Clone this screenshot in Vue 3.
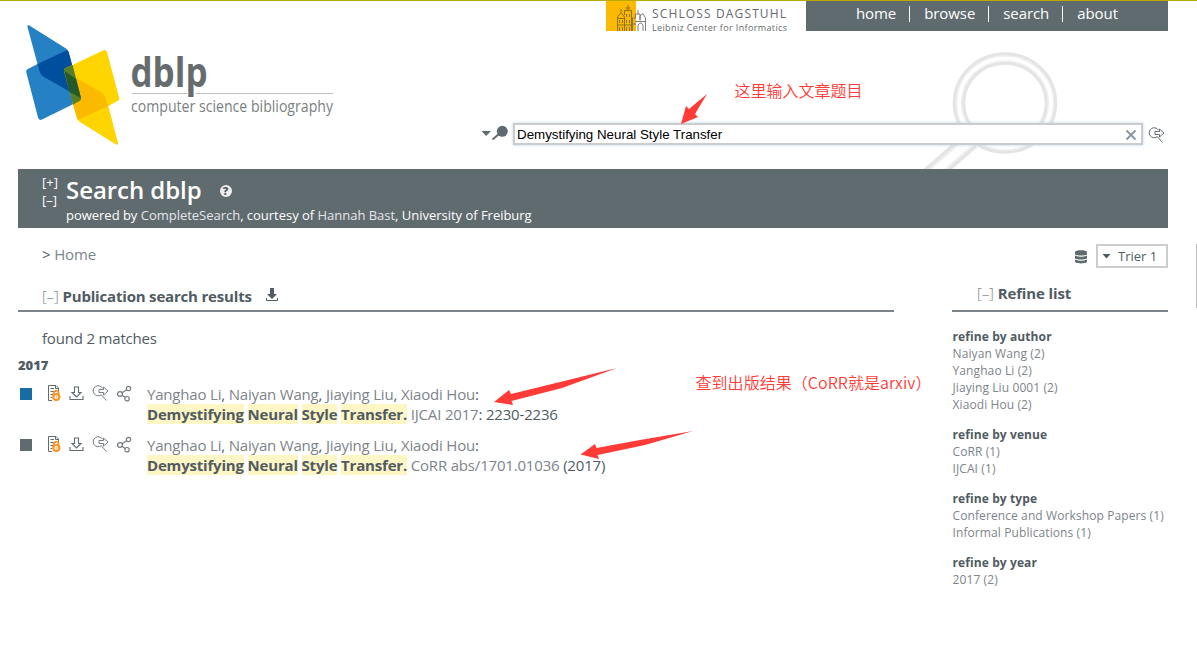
<script setup>
const menu = ['home', 'browse', 'search', 'about']
const entries = [
  { kind: 'conf', venue: 'IJCAI 2017', tail: ': 2230-2236' },
  { kind: 'informal', venue: 'CoRR abs/1701.01036', tail: ' (2017)' }
]
const authors = ['Yanghao Li', 'Naiyan Wang', 'Jiaying Liu', 'Xiaodi Hou']
const words = ['Demystifying', 'Neural', 'Style', 'Transfer.']
const facets = [
  { title: 'refine by author', items: ['Naiyan Wang (2)', 'Yanghao Li (2)', 'Jiaying Liu 0001 (2)', 'Xiaodi Hou (2)'] },
  { title: 'refine by venue', items: ['CoRR (1)', 'IJCAI (1)'] },
  { title: 'refine by type', items: ['Conference and Workshop Papers (1)', 'Informal Publications (1)'] },
  { title: 'refine by year', items: ['2017 (2)'] }
]
</script>

<template>
  <div class="page">
    <header class="header">
      <svg class="lens" width="150" height="120" viewBox="915 49 150 120" fill="none">
        <path d="M971 140L930 176" stroke="#e4e4e4" stroke-width="19" />
        <path d="M971 140L930 176" stroke="#f1f1f1" stroke-width="12" />
        <path d="M971 140L930 176" stroke="#fff" stroke-width="8" />
        <ellipse cx="1005" cy="103" rx="46" ry="44.500" stroke="#e4e4e4" stroke-width="12.500" />
        <ellipse cx="1005" cy="103" rx="46" ry="44.500" stroke="#f0f0f0" stroke-width="6.500" />
        <ellipse cx="1005" cy="103" rx="46" ry="44.500" stroke="#fff" stroke-width="3.500" />
      </svg>
      <svg class="logo" width="330" height="140" viewBox="20 20 330 140">
        <path d="M28.500 25L66 48.500Q68 50 68.600 52L81 98Q81.500 100 79.500 101L42 119.500Q39 121 38 117.500L26.200 72Q25.700 70 27.800 69L37.500 64L27.500 27Q27.200 24.700 28.500 25Z" fill="#2581c4" />
        <path d="M37.500 64L66 50.500Q68 49.500 68.600 52L81 98L44 77Q41 75 40.200 73Z" fill="#004e9e" />
        <path d="M72.600 65L103.500 50.300Q106 49.200 107 52L119.200 98Q119.800 100 117.500 101L108.300 106L118 143Q118 145.500 116 144.500L80 122Q77.500 120.500 77 118L64 71Q63.500 69 65.500 68Z" fill="#ffd500" />
        <path d="M76 78L101 92Q104 94 105 97L108.300 106L80 119Q77.500 120.500 77 118L72 101Z" fill="#fbba00" />
        <path d="M72.600 65L81 98Q81.500 100 79.500 101L73 104.500L64 71Q63.500 69 65.500 68Z" fill="#577e28" />
        <path d="M64.500 71L76 79L81 98L69.500 92Z" fill="#24592b" />
        <text class="wordmark" x="130.500" y="87" textLength="77" lengthAdjust="spacingAndGlyphs">dblp</text>
        <path d="M132 93.500H189M195.500 93.500H333" stroke="#bdbfc1" />
        <text class="subtitle" x="131" y="111.500" textLength="202" lengthAdjust="spacingAndGlyphs">computer science bibliography</text>
      </svg>
      <div class="topbar">
        <svg class="dagstuhl" width="200" height="36" viewBox="606 1 200 36">
          <path d="M606 1H636V31H606Z" fill="#fbba00" />
          <g fill="none" stroke="#826a25" stroke-width=".9">
            <path d="M617.500 31V17L621 12.500L624.500 17V31M624.500 15V10.500H631.500V31M628 10.500V5M621 12V9M625.500 8H630.500M617.500 18.500H624.500M617.500 25H632M619.500 20V23M622.500 20V23M626.500 14V17M629.500 14V17M626.500 20V23M629.500 20V23M619.500 27V31M622.500 27V31M626.500 27V31M629.500 27V31" />
            <path d="M632.500 31V18H635.500V14H640V20M638 14V10M635 21.500H646M640 20.500V16L643 13.500L645.500 18V31M638 31V25Q641 21 643 25V31M633 24H636" stroke="#6f7072" />
          </g>
          <text class="schloss" x="652" y="18" textLength="134">SCHLOSS DAGSTUHL</text>
          <text class="leibniz" x="652" y="31" textLength="135">Leibniz Center for Informatics</text>
        </svg>
        <nav class="menu"><a v-for="m in menu" :key="m">{{ m }}</a></nav>
      </div>
      <div class="search-row">
        <svg class="finder" width="32" height="22" viewBox="481 123 32 22">
          <path d="M481.500 131H491L486.200 136Z" fill="#606b70" />
          <path d="M492.500 139.500L499 134" stroke="#606b70" stroke-width="2" />
          <circle cx="502.300" cy="131.300" r="5.500" fill="#606b70" />
        </svg>
        <div class="field"><span>Demystifying Neural Style Transfer</span>
          <svg width="12" height="12" viewBox="0 0 12 12"><path d="M1.500 1.500L10.500 10.500M10.500 1.500L1.500 10.500" stroke="#8b98a1" stroke-width="2" /></svg>
        </div>
        <svg class="go" width="17" height="17" viewBox="0 0 17 17" fill="none" stroke="#606b70"><path d="M10.500 3.200A5 5 0 1 0 9.500 9.500M9.500 10L14.500 15.500M7 4.500H11.500V2L16 6L11.500 10V7.500H7Z" /></svg>
      </div>
    </header>

    <section class="banner">
      <div class="toggles"><span>[+]</span><span>[–]</span></div>
      <div>
        <h1><span>Search dblp</span><i>?</i></h1>
        <p>powered by <a>CompleteSearch</a>, courtesy of <a>Hannah Bast</a>, University of Freiburg</p>
      </div>
    </section>

    <div class="crumbs">
      <p>&gt; <a>Home</a></p>
      <div class="server">
        <svg width="12" height="14" viewBox="0 0 12 14" fill="#606b70"><path d="M0 2C0-.5 12-.5 12 2V4C12 6 0 6 0 4ZM0 5.500Q6 8 12 5.500V8C12 10 0 10 0 8ZM0 9.500Q6 12 12 9.500V11.500C12 14 0 14 0 11.500Z" /></svg>
        <div class="select"><b></b><span>Trier 1</span></div>
      </div>
    </div>

    <main class="content">
      <section class="results">
        <h2><a>[–]</a><span>Publication search results</span>
          <svg width="12" height="14" viewBox="0 0 12 14"><path d="M4 0H8V6H11L6 11L1 6H4Z" fill="#505b62" /><path d="M.5 10V12.500H11.500V10" fill="none" stroke="#505b62" /></svg>
        </h2>
        <p class="found">found 2 matches</p>
        <h3>2017</h3>
        <article v-for="e in entries" :key="e.kind">
          <div class="actions">
            <i :class="['box', e.kind]"></i>
            <svg width="14" height="17" viewBox="0 0 14 17" fill="none" stroke="#606b70"><path d="M1.500 .5H9L11.500 3V6M8.500 .5V3.500H11.500M1.500 .5V15.500H5M3.500 3.500H7M3.500 6.500H9M3.500 9.500H6M3.500 12.500H5" /><path d="M7 9V7.500A2.300 2.300 0 0 1 11.500 7.500V10" stroke="#ff931e" stroke-width="1.800" /><circle cx="9.300" cy="12" r="3" stroke="#ff931e" stroke-width="2.200" /><circle cx="9.300" cy="12" r=".8" fill="#ff931e" stroke="none" /></svg>
            <svg width="15" height="17" viewBox="0 0 15 17" fill="none" stroke="#606b70" stroke-width="1.100"><path d="M5.500 2H9.500V7.500H12L7.500 12L3 7.500H5.500ZM1 11V14.500H14V11" /></svg>
            <svg width="17" height="17" viewBox="0 0 17 17" fill="none" stroke="#737d82"><path d="M10.500 3.200A5 5 0 1 0 9.500 9.500M9.500 10L14.500 15.500M7 4.500H11.500V2L16 6L11.500 10V7.500H7Z" /></svg>
            <svg width="15" height="17" viewBox="0 0 15 17" fill="none" stroke="#737d82" stroke-width="1.200"><circle cx="3" cy="9" r="2.400" /><circle cx="11.500" cy="3.500" r="2.200" /><circle cx="10" cy="13.700" r="2.200" /><path d="M5 7.700L9.700 4.700M5 10.200L8.200 12.500" /></svg>
          </div>
          <div class="cite">
            <p class="authors"><template v-for="(a, i) in authors" :key="a"><a>{{ a }}</a>{{ i < 3 ? ', ' : ':' }}</template></p>
            <p><strong><template v-for="(w, i) in words" :key="w">{{ i ? ' ' : '' }}<mark>{{ w }}</mark></template></strong>&nbsp;<a>{{ e.venue }}</a>{{ e.tail }}</p>
          </div>
        </article>
      </section>

      <aside class="refine">
        <h2><a>[–]</a><span>Refine list</span></h2>
        <section v-for="f in facets" :key="f.title">
          <h4>{{ f.title }}</h4>
          <p v-for="x in f.items" :key="x">{{ x }}</p>
        </section>
      </aside>
    </main>

    <i class="edge"></i>
    <div class="note title-note">这里输入文章题目</div>
    <div class="note result-note">查到出版结果（CoRR就是arxiv）</div>
    <svg class="arrows" width="1197" height="666" viewBox="0 0 1197 666" fill="#ff3b38">
      <path d="M681 124L686 106L689 109L707 94L695 114L698 117Z" />
      <path d="M494 402L509 390L511 394L560 382L617 368L562 388L511.500 401L513 405Z" />
      <path d="M580.500 454.500L595 444L596.500 448L640 440L693 431L645 445L597.500 455L599 459Z" />
    </svg>
  </div>
</template>

<style>
html, body { margin: 0; background: #fff; overflow: hidden; }
</style>

<style scoped>
* { box-sizing: border-box; }
h1, h2, h3, h4, p { margin: 0; }
i { font-style: normal; }
svg { display: block; flex: none; overflow: visible; }
.page { position: relative; width: 1197px; height: 666px; overflow: hidden; border-top: 1px solid #b9a900; background: #fff; color: #505b62; font: 15px/20px "Open Sans", sans-serif; white-space: nowrap; }
.page a { color: #7d848a; }
.header { position: relative; height: 168px; margin-right: 29px; }
.page .lens { position: absolute; left: 915px; top: 48px; overflow: hidden; }
.logo { position: absolute; left: 20px; top: 19px; }
.wordmark { font: 700 42px "Open Sans", sans-serif; fill: #666b6e; }
.subtitle { font: 400 15.500px "Open Sans", sans-serif; fill: #7a7f82; }
.topbar { position: relative; display: flex; justify-content: flex-end; height: 30px; }
.schloss { font: 12px "Open Sans", sans-serif; fill: #65696d; }
.leibniz { font: 9px "Open Sans", sans-serif; fill: #65696d; }
.menu { display: flex; width: 362px; height: 30px; padding: 5px 0 0 50px; background: #606b70; letter-spacing: -.08px; }
.menu a { height: 16px; line-height: 15px; color: #fff; }
.menu a + a { margin-left: 13px; padding-left: 14px; border-left: 1px solid #fff; }
.search-row { position: relative; display: flex; align-items: center; margin: 92px 0 0 481px; height: 22px; }
.finder { margin-left: 0; }
.field { display: flex; align-items: center; justify-content: space-between; width: 630px; height: 22px; padding: 1px 4px 0 2px; border: 2px solid #ccc; background: #fff; color: #000; font: 13.333px "Liberation Sans", Arial, sans-serif; box-shadow: 0 0 3px #b5d7f3; }
.go { margin: 2px 0 0 5px; }
.banner { display: flex; width: 1150px; height: 59px; margin-left: 18px; padding-left: 24px; background: #606b70; color: #fff; }
.toggles { display: flex; flex-direction: column; width: 24px; padding-top: 4px; font-size: 13px; line-height: 18px; }
h1 { display: flex; align-items: center; height: 33px; margin-top: 4px; font-size: 24px; font-weight: 600; letter-spacing: -.06px; }
h1 i { width: 12px; height: 12px; margin: 2px 0 0 18px; border-radius: 50%; background: #eee; color: #505b62; font: 800 11px/12px "Open Sans", sans-serif; text-align: center; }
.banner p { font-size: 13px; line-height: 18px; letter-spacing: -.02px; }
.page .banner a { color: #e4e6e8; }
.crumbs { display: flex; justify-content: space-between; height: 52px; margin: 0 29px 0 18px; padding: 16px 0 0 24px; }
.crumbs > p { letter-spacing: -.15px; }
.server { display: flex; align-items: flex-start; gap: 9px; }
.server > svg { margin-top: 6px; }
.select { display: flex; align-items: center; width: 72px; height: 24px; padding-left: 4px; border: 2px solid #ccc; font-size: 13px; }
.select b { width: 9px; height: 5px; margin-right: 7px; background: #505b62; clip-path: polygon(0 0, 100% 0, 50% 100%); }
.content { display: flex; justify-content: space-between; margin: 0 29px 0 18px; }
.results { width: 876px; letter-spacing: -.185px; }
h2 { display: flex; height: 32px; padding: 6px 0 0 24px; border-bottom: 2px solid #7d848a; font-size: 15px; font-weight: 700; }
h2 a { font-weight: 300; margin-right: 4px; }
h2 svg { margin: 2px 0 0 14px; }
.found { margin: 16px 0 0 24px; }
h3 { margin: 8px 0 10px; font-size: 13px; line-height: 18px; font-weight: 800; letter-spacing: 0; }
article { display: flex; height: 40px; margin-bottom: 11px; }
.actions { display: flex; align-items: center; width: 129px; height: 20px; padding-left: 2px; }
.actions svg { margin-top: -2px; }
.actions svg + svg { margin-left: 8.300px; }
.box { width: 12px; height: 12px; margin-right: 14.500px; }
.conf { background: #196ca3; }
.informal { background: #606b70; }
mark { background: #fff6c5; color: inherit; }
.refine { width: 216px; padding-left: 0; font-size: 12px; line-height: 17px; color: #7d848a; letter-spacing: .1px; }
.refine h2 { padding: 3px 0 0 25px; margin-bottom: 16px; color: #505b62; line-height: 20px; letter-spacing: -.13px; }
.refine section { margin-bottom: 13px; padding-left: .500px; }
h4 { font-size: 12px; line-height: 17px; font-weight: 700; color: #505b62; }
.edge { position: absolute; left: 1196px; top: 243px; width: 1px; height: 64px; background: #bbb; }
.note { position: absolute; color: #ff3b38; font: 350 16px/20px "Noto Sans CJK SC", sans-serif; }
.title-note { left: 734.500px; top: 79px; }
.result-note { left: 695.500px; top: 371px; letter-spacing: .05px; }
.arrows { position: absolute; left: 0; top: -1px; pointer-events: none; }
</style>
